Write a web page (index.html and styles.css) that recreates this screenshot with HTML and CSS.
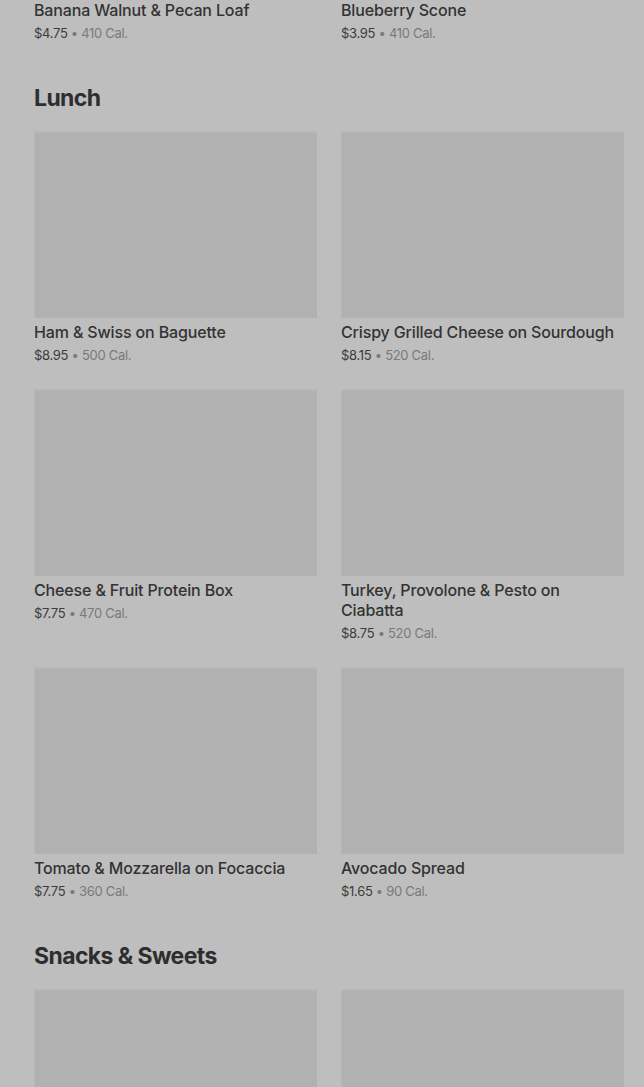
FILE: index.html
```html
<!DOCTYPE html>
<html>
<head>
<meta charset="utf-8">
<link rel="stylesheet" href="styles.css">
</head>
<body>
<main class="page">
  <section class="section first">
    <div class="grid">
      <div class="card">
        <div class="thumb"></div>
        <div class="name">Banana Walnut &amp; Pecan Loaf</div>
        <div class="meta"><span class="price">$4.75</span> • 410 Cal.</div>
      </div>
      <div class="card">
        <div class="thumb"></div>
        <div class="name">Blueberry Scone</div>
        <div class="meta"><span class="price">$3.95</span> • 410 Cal.</div>
      </div>
    </div>
  </section>

  <section class="section">
    <h2 class="heading">Lunch</h2>
    <div class="grid">
      <div class="card">
        <div class="thumb"></div>
        <div class="name">Ham &amp; Swiss on Baguette</div>
        <div class="meta"><span class="price">$8.95</span> • 500 Cal.</div>
      </div>
      <div class="card">
        <div class="thumb"></div>
        <div class="name">Crispy Grilled Cheese on Sourdough</div>
        <div class="meta"><span class="price">$8.15</span> • 520 Cal.</div>
      </div>
      <div class="card">
        <div class="thumb"></div>
        <div class="name">Cheese &amp; Fruit Protein Box</div>
        <div class="meta"><span class="price">$7.75</span> • 470 Cal.</div>
      </div>
      <div class="card">
        <div class="thumb"></div>
        <div class="name">Turkey, Provolone &amp; Pesto on Ciabatta</div>
        <div class="meta"><span class="price">$8.75</span> • 520 Cal.</div>
      </div>
      <div class="card">
        <div class="thumb"></div>
        <div class="name">Tomato &amp; Mozzarella on Focaccia</div>
        <div class="meta"><span class="price">$7.75</span> • 360 Cal.</div>
      </div>
      <div class="card">
        <div class="thumb"></div>
        <div class="name">Avocado Spread</div>
        <div class="meta"><span class="price">$1.65</span> • 90 Cal.</div>
      </div>
    </div>
  </section>

  <section class="section">
    <h2 class="heading">Snacks &amp; Sweets</h2>
    <div class="grid">
      <div class="card">
        <div class="thumb"></div>
      </div>
      <div class="card">
        <div class="thumb"></div>
      </div>
    </div>
  </section>
</main>
</body>
</html>
```

FILE: styles.css
```css
html, body {
  margin: 0;
  padding: 0;
  background: #bebebe;
  overflow: hidden;
}

body {
  font-family: Inter, "Noto Sans", "Liberation Sans", sans-serif;
  color: #333;
}

.page {
  padding: 0 20px 0 34px;
  margin-top: -191px;
}

.section {
  padding-top: 40px;
}

.section.first {
  padding-top: 0;
}

.heading {
  margin: 0 0 17px 0;
  font-size: 23px;
  line-height: 32px;
  font-weight: 700;
  color: #2e2e2e;
  letter-spacing: -0.6px;
}

.grid {
  display: grid;
  grid-template-columns: 1fr 1fr;
  column-gap: 24px;
  row-gap: 25px;
}

.card {
  display: flex;
  flex-direction: column;
}

.thumb {
  height: 187px;
  background: #b1b1b1;
  border-top: 2px solid #b7b7b7;
  box-sizing: border-box;
  box-shadow: inset 1px 0 0 #b6b6b6;
}

.name {
  margin-top: 4px;
  font-size: 16px;
  line-height: 20px;
  font-weight: 500;
  color: #333;
  letter-spacing: -0.15px;
}

.meta {
  margin-top: 4px;
  font-size: 13px;
  line-height: 18px;
  color: #7a7a7a;
  letter-spacing: -0.3px;
}

.price {
  color: #3c3c3c;
}
```
